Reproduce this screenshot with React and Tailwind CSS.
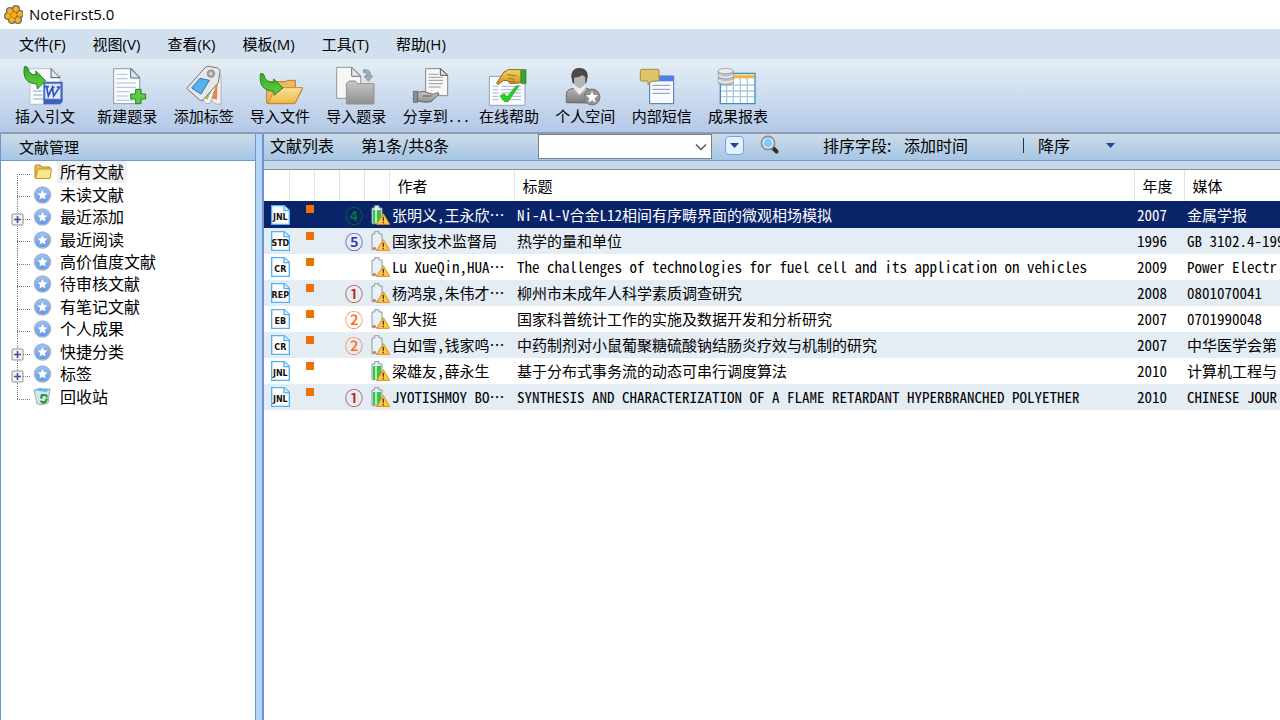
import React from "react";

const ui = "font-['Open_Sans','Noto_Sans_CJK_SC',sans-serif]";
const song = "font-['Noto_Sans_CJK_SC',sans-serif] [font-feature-settings:'hwid']";
const hei = "font-['Noto_Sans_CJK_SC',sans-serif]";

const menus = ["文件(F)", "视图(V)", "查看(K)", "模板(M)", "工具(T)", "帮助(H)"];

function Logo() {
  const cells = [[7, 6], [13, 4], [5, 11], [11, 10], [17, 9], [9, 15], [15, 15]];
  return (
    <svg className="size-5" viewBox="0 0 20 20" aria-hidden="true">
      {cells.map(([x, y]) => (
        <circle key={`b${x}-${y}`} cx={x} cy={y} r="4" fill="#5a6a78" />
      ))}
      {cells.map(([x, y]) => (
        <path key={`c${x}-${y}`} d={`M${x - 2.8} ${y}l1.3-2.4h2.8l1.4 2.4-1.4 2.5h-2.8z`} fill="#ffb31a" stroke="#e09a18" strokeWidth=".9" />
      ))}
    </svg>
  );
}

function Defs() {
  return (
    <svg className="absolute size-0" aria-hidden="true">
      <defs>
        <linearGradient id="green" x1="0" y1="0" x2="0" y2="1">
          <stop offset="0" stopColor="#3fa52c" />
          <stop offset="1" stopColor="#5fd03c" />
        </linearGradient>
        <linearGradient id="gray" x1="0" y1="0" x2="0" y2="1">
          <stop offset="0" stopColor="#c8c8c8" />
          <stop offset="1" stopColor="#8f8f8f" />
        </linearGradient>
        <linearGradient id="folder" x1="0" y1="0" x2="0" y2="1">
          <stop offset="0" stopColor="#fbe09a" />
          <stop offset="1" stopColor="#f0b84a" />
        </linearGradient>
        <linearGradient id="person" x1="0" y1="0" x2="0" y2="1">
          <stop offset="0" stopColor="#b5b5b5" />
          <stop offset="1" stopColor="#7c7c7c" />
        </linearGradient>
        <linearGradient id="orb" x1="0" y1="0" x2="0" y2="1">
          <stop offset="0" stopColor="#9cc3f7" />
          <stop offset="1" stopColor="#6294e2" />
        </linearGradient>
        <linearGradient id="gold" x1="0" y1="0" x2="0" y2="1">
          <stop offset="0" stopColor="#f6d560" />
          <stop offset="1" stopColor="#c8961e" />
        </linearGradient>
      </defs>
    </svg>
  );
}

const greenArrow = "M73 25Q83 24 84 30Q84 48 108 50L107 38L137 67L112 92L110 77Q82 76 74 55Q70 40 73 25Z";

const drawings = {
  cite: (
    <>
      <path d="M90 31H160L180 51V138H90Z" fill="#f8fafc" stroke="#a9b0b8" strokeWidth="2" />
      <path d="M153 31L180 58H153Z" fill="#dfe8ee" stroke="#4e5b68" strokeWidth="3" />
      <path d="M100 98H127M100 110H127M100 122H140" stroke="#8ea6c8" strokeWidth="3" />
      <path d="M130 70H188V130L180 138H130Z" fill="#3c62c0" />
      <path d="M135 76H182V122H135Z" fill="#e4ebf8" stroke="#6e8dd8" strokeWidth="2" />
      <path d="M134 85H147M140 86L145 113L157 87L161 113L179 86M170 86H181M157 87H164" fill="none" stroke="#2c55b8" strokeWidth="5" />
      <path d={greenArrow} fill="url(#green)" stroke="#27851d" strokeWidth="3" />
    </>
  ),
  add: (
    <>
      <path d="M341 31H395L419 57V136H341Z" fill="#f9fbfd" stroke="#8f98a6" strokeWidth="3" />
      <path d="M392 31L419 59H392Z" fill="#d9e8f0" stroke="#4f7386" strokeWidth="3" />
      <path d="M349 48H382M349 61H384M349 74H408M349 87H408M349 100H389M349 113H384M349 126H400" stroke="#b3bdd6" strokeWidth="3" />
      <path d="M407 93H423V107H437V122H423V136H407V122H392V107H407Z" fill="#5ccb45" stroke="#25831c" strokeWidth="3" />
    </>
  ),
  tag: (
    <>
      <path d="M632 60L660 50V137H645L625 120Z" fill="#f2f2f2" stroke="#999" strokeWidth="2" />
      <path d="M636 76L650 72L648 124L630 120Z" fill="#ef8545" />
      <path d="M590 105L632 60L648 74L627 135L615 136Z" fill="#f7f7f7" stroke="#999" strokeWidth="2" />
      <path d="M610 104L629 78L636 83L620 124L604 115Z" fill="#8cd13f" />
      <path d="M612 28Q617 23 625 24L650 29Q657 32 657 40L652 73L606 125Q600 129 594 123L557 90Z" fill="#e7e7e7" stroke="#777" strokeWidth="3" />
      <path d="M597 60L625 66L600 107L572 89Z" fill="#58b1eb" stroke="#2879b7" strokeWidth="3" />
      <circle cx="630" cy="46" r="11" fill="#aaa" stroke="#888" strokeWidth="3" />
      <circle cx="630" cy="46" r="4" fill="#ddd" />
    </>
  ),
  importFile: (
    <>
      <path d="M800 134V70H856L862 66H886V90H908L885 136H804Z" fill="#edb95e" stroke="#b9782a" strokeWidth="3" />
      <path d="M826 88H908L885 135H804Z" fill="url(#folder)" stroke="#c98a32" strokeWidth="3" />
      <path d="M781 46Q792 44 793 53Q795 70 821 73V62L849 89L822 111V99Q791 97 783 76Q779 61 781 46Z" fill="url(#green)" stroke="#27851d" strokeWidth="3" />
    </>
  ),
  importRecord: (
    <>
      <path d="M1010 27H1055L1082 53V120H1010Z" fill="#f7f7f7" stroke="#969696" strokeWidth="3" />
      <path d="M1055 27L1082 54H1055Z" fill="#e3e3e3" stroke="#777" strokeWidth="3" />
      <path d="M1039 137V76L1047 68H1067L1073 76H1122V137Z" fill="url(#gray)" stroke="#929292" strokeWidth="3" />
      <path d="M1091 34Q1111 33 1111 47V53H1118L1105 69L1093 53H1101Q1101 42 1090 42Z" fill="#a5adb4" stroke="#707880" strokeWidth="2" />
    </>
  ),
  share: (
    <>
      <path d="M110 31H155L176 50V112H110Z" fill="#f8f8f8" stroke="#858585" strokeWidth="3" />
      <path d="M154 31L176 51H154Z" fill="#ddd" stroke="#555" strokeWidth="3" />
      <path d="M119 48H148M119 57H162M119 66H162M119 76H162M119 86H155" stroke="#999" strokeWidth="3" />
      <path d="M73 99H86V132H73Z" fill="#8c8c8c" stroke="#555" strokeWidth="2" />
      <path d="M86 102Q105 95 121 105L132 108L147 103Q154 106 145 113L126 130Q110 134 86 128Z" fill="url(#gray)" stroke="#666" strokeWidth="3" />
      <path d="M102 113H127" stroke="#555" strokeWidth="3" />
    </>
  ),
  help: (
    <>
      <path d="M298 54H405V141H298Z" fill="#fbfcfe" stroke="#91a0bd" strokeWidth="3" />
      <path d="M308 84H325M308 94H325M308 104H325M308 114H325M308 124H325M334 84H393M334 94H393M334 104H393M334 114H393M334 124H393" stroke="#a6b5d2" strokeWidth="3" />
      <path d="M330 113L343 106L351 116L377 84L387 82L354 130H344Z" fill="#25cf25" stroke="#13a913" strokeWidth="2" />
      <path d="M341 42L355 34H393V72L381 75H359L354 67L341 66L324 79L320 74Z" fill="url(#gold)" stroke="#8f6717" strokeWidth="3" />
      <path d="M352 49L379 53M355 60L374 63M359 70H376" stroke="#a2731b" strokeWidth="3" />
      <path d="M394 34H408V76H394Z" fill="#35a52f" stroke="#237b23" strokeWidth="2" />
    </>
  ),
  person: (
    <>
      <path d="M529 133V108Q529 94 547 91L590 90Q608 95 609 113V134Z" fill="url(#person)" stroke="#666" strokeWidth="3" />
      <path d="M551 90L568 110L587 90L584 78H555Z" fill="#ececec" />
      <path d="M545 54Q545 31 568 30Q592 30 592 54L588 74H549Z" fill="#4a4a4a" stroke="#333" strokeWidth="2" />
      <path d="M552 58Q570 57 577 50L586 57V74Q579 89 568 89Q556 88 552 74Z" fill="#b5b5b5" />
      <circle cx="606" cy="116" r="24" fill="#929292" stroke="#777" strokeWidth="3" />
      <path d="M606 98L611 110L624 111L614 120L617 133L606 126L595 133L598 120L588 111L601 110Z" fill="#fff" />
    </>
  ),
  message: (
    <>
      <path d="M776 53H848V136H776Z" fill="#f8fbff" stroke="#506eaf" strokeWidth="3" />
      <path d="M777 53H847V69H777Z" fill="#4d81e7" />
      <path d="M784 81H837M784 93H837M784 105H837" stroke="#8b96b8" strokeWidth="3" />
      <path d="M752 33H801Q804 33 804 37V64Q804 68 800 68H784L771 79V68H752Q748 68 748 64V37Q748 33 752 33Z" fill="#e0c568" stroke="#a58c36" strokeWidth="3" />
    </>
  ),
  report: (
    <>
      <path d="M991 45H1095V136H991Z" fill="#fff" stroke="#3b8bc7" strokeWidth="4" />
      <path d="M1030 49H1092V60H1030Z" fill="#f8b72c" />
      <path d="M994 80H1092M994 98H1092M994 115H1092M1010 80V133M1030 49V133M1051 49V133M1072 49V133" stroke="#a6c9e0" strokeWidth="4" />
      <path d="M985 38V72Q987 80 1007 80Q1029 79 1030 71V38Z" fill="#bfc4c9" stroke="#848b91" strokeWidth="2" />
      <ellipse cx="1007" cy="38" rx="23" ry="8" fill="#e8eaec" stroke="#8a9095" strokeWidth="2" />
      <path d="M985 52Q1007 64 1030 52M985 66Q1007 78 1030 66" fill="none" stroke="#f2f4f5" strokeWidth="4" />
      <path d="M985 56Q1007 68 1030 56" fill="none" stroke="#858c93" strokeWidth="2" />
    </>
  ),
};

const tools = [
  ["cite", "插入引文", "75 20 120 120"],
  ["add", "新建题录", "321 20 120 120"],
  ["tag", "添加标签", "549 20 120 120"],
  ["importFile", "导入文件", "780 20 120 120"],
  ["importRecord", "导入题录", "1008 20 120 120"],
  ["share", "分享到...", "72 20 120 120"],
  ["help", "在线帮助", "297 20 120 120"],
  ["person", "个人空间", "525 20 120 120"],
  ["message", "内部短信", "753 20 120 120"],
  ["report", "成果报表", "984 20 120 120"],
];

const tree = [
  { label: "所有文献", icon: "folder", active: true },
  { label: "未读文献" },
  { label: "最近添加", branch: true },
  { label: "最近阅读" },
  { label: "高价值度文献" },
  { label: "待审核文献" },
  { label: "有笔记文献" },
  { label: "个人成果" },
  { label: "快捷分类", branch: true },
  { label: "标签", branch: true },
  { label: "回收站", icon: "bin" },
];

function TreeIcon({ kind }) {
  if (kind === "folder")
    return (
      <svg className="size-5" viewBox="0 0 20 20" aria-hidden="true">
        <path d="M2 16V4Q2 3 3 3H7L9 5H17V16Z" fill="#e8bd48" stroke="#b98520" />
        <path d="M5 7H18.5L17 16.5H2.5Z" fill="#fbe58c" stroke="#c4932a" />
      </svg>
    );
  if (kind === "bin")
    return (
      <svg className="size-5" viewBox="0 0 20 20" aria-hidden="true">
        <path d="M1 3L17 2L15 16Q10 19 4 17Z" fill="#d5e3ec" stroke="#9bb0bd" />
        <path d="M1 3L6 1L17 2L13 5Z" fill="#65b5e5" />
        <path d="M7 11L8 7H13L15 9L14 11L12 9H10L9 12ZM8 16L7 13L9 14H12L13 11L15 12L13 16L10 17Z" fill="#249c32" />
      </svg>
    );
  return (
    <svg className="size-5" viewBox="0 0 20 20" aria-hidden="true">
      <circle cx="9.5" cy="10" r="8" fill="url(#orb)" stroke="#a2b4cf" strokeWidth="1.4" />
      <path d="M9.5 5L11 8.2L14.4 8.6L11.9 11L12.5 14.4L9.5 12.7L6.5 14.4L7.1 11L4.6 8.6L8 8.2Z" fill="#fff" />
    </svg>
  );
}

function TreeGuide({ first, last, branch }) {
  return (
    <svg className="h-full w-8 shrink-0" aria-hidden="true">
      <line x1="16.5" x2="16.5" y1={first ? "58%" : "0"} y2={last ? "58%" : "100%"} stroke="#777" strokeDasharray="1 1" />
      <line x1="16" x2="29" y1="13.5" y2="13.5" stroke="#777" strokeDasharray="1 1" />
      {branch && (
        <g>
          <rect x="11" y="8" width="11" height="11" rx="1" fill="#f3f3f3" stroke="#8f8f8f" strokeWidth="1" />
          <path d="M13 13.5H20M16.5 10V17" stroke="#3a4fa0" strokeWidth="1.6" />
        </g>
      )}
    </svg>
  );
}

const rows = [
  ["JNL", "④", "text-[#0a7a2c]", true, "张明义,王永欣…", "Ni-Al-V合金L12相间有序畴界面的微观相场模拟", "2007", "金属学报"],
  ["STD", "⑤", "text-[#3030a8]", false, "国家技术监督局", "热学的量和单位", "1996", "GB 3102.4-199"],
  ["CR", "", "", false, "Lu XueQin,HUA…", "The challenges of technologies for fuel cell and its application on vehicles", "2009", "Power Electr"],
  ["REP", "①", "text-[#b82020]", false, "杨鸿泉,朱伟才…", "柳州市未成年人科学素质调查研究", "2008", "0801070041"],
  ["EB", "②", "text-[#ff6a20]", false, "邹大挺", "国家科普统计工作的实施及数据开发和分析研究", "2007", "0701990048"],
  ["CR", "②", "text-[#ff6a20]", false, "白如雪,钱家鸣…", "中药制剂对小鼠葡聚糖硫酸钠结肠炎疗效与机制的研究", "2007", "中华医学会第"],
  ["JNL", "", "", true, "梁雄友,薛永生", "基于分布式事务流的动态可串行调度算法", "2010", "计算机工程与"],
  ["JNL", "①", "text-[#b82020]", true, "JYOTISHMOY BO…", "SYNTHESIS AND CHARACTERIZATION OF A FLAME RETARDANT HYPERBRANCHED POLYETHER", "2010", "CHINESE JOUR"],
];

function DocIcon({ kind }) {
  return (
    <svg className="ml-[7px] h-5 w-[19px]" viewBox="0 0 57 60" role="img" aria-label={kind}>
      <path d="M2 2H40L55 16V58H2Z" fill="#fff" stroke="#55b0f5" strokeWidth="4" />
      <path d="M39 2V17H55" fill="#d8efff" stroke="#55b0f5" strokeWidth="4" />
      <text x="28" y="45" textAnchor="middle" className="fill-[#111] font-['DejaVu_Sans',sans-serif] text-[24px] font-bold">{kind}</text>
    </svg>
  );
}

function StateIcon({ full }) {
  return (
    <svg className="ml-[7px] h-5 w-[19px]" viewBox="333 220 57 60" aria-hidden="true">
      <path d="M344 222H357V229H366V276H336V229H344Z" fill="#e9f1f6" stroke="#8c9aa6" strokeWidth="3" />
      {full ? (
        <>
          <path d="M339 235H363V274H339Z" fill="#35c445" />
          <path d="M345 235H351V274H345Z" fill="#b9f2b4" />
        </>
      ) : (
        <path d="M339 269H347V274H339Z" fill="#ef4b4b" />
      )}
      <path d="M370 246L389 278H350Z" fill="#ffc742" stroke="#d98c1e" strokeWidth="3" strokeLinejoin="round" />
      <path d="M370 255V267M370 270V275" stroke="#4d3a10" strokeWidth="4" />
    </svg>
  );
}

const th = "border-r border-[#e2e2e2] text-left font-normal";
const cell = "truncate pl-[3px]";

export default function App() {
  return (
    <div lang="zh-CN" className={`flex h-screen flex-col overflow-hidden bg-white text-black ${hei}`}>
      <Defs />
      <header className={`flex h-[29px] shrink-0 items-center gap-[6px] pl-[3px] text-[15px] ${ui}`}>
        <Logo />
        <h1>NoteFirst5.0</h1>
      </header>
      <nav className={`flex h-[30px] shrink-0 items-center gap-[27px] bg-[#d2dfef] pl-[19px] text-[15px] ${ui}`}>
        {menus.map((m) => (
          <button key={m} type="button">{m}</button>
        ))}
      </nav>
      <div className="h-[75px] shrink-0 overflow-hidden border-b-2 border-[#8d9cb5] bg-linear-to-b from-[#e5eff5] to-[#b4c8e7] pt-[6px] pl-[15px]">
        <div className="flex max-w-[753px] justify-between">
          {tools.map(([id, label, box], i) => (
            <button key={id} type="button" className={`flex w-[60px] shrink-0 flex-col items-center ${i === 0 ? "mr-[6px]" : ""}`}>
              <svg className="size-10 overflow-visible" viewBox={box} aria-hidden="true">{drawings[id]}</svg>
              <span className={`w-full text-left whitespace-nowrap text-[15px] leading-[22px] ${song}`}>{label}</span>
            </button>
          ))}
        </div>
      </div>
      <div className="flex min-h-0 flex-1">
        <aside className="w-64 shrink-0 border-x border-[#6f93cf]">
          <h2 className="flex h-[27px] items-center border-b border-[#7599d1] bg-linear-to-b from-[#cbdcea] to-[#a6c5e3] pl-[18px] text-[15px]">文献管理</h2>
          <ul className="grid h-[247px] auto-rows-fr text-[16px]">
            {tree.map((t, i) => (
              <li key={t.label} className="flex min-h-0 items-center">
                <TreeGuide first={i === 0} last={i === tree.length - 1} branch={t.branch} />
                <TreeIcon kind={t.icon} />
                <button type="button" className={`ml-1 px-[3px] pb-0.5 leading-5 ${t.active ? "bg-[#f0f0f0]" : ""}`}>{t.label}</button>
              </li>
            ))}
          </ul>
        </aside>
        <div className="w-[6px] shrink-0 bg-[#b5d5fb]" />
        <main className="flex min-w-0 flex-1 flex-col border-l-2 border-[#6f93cf]">
          <div className="flex h-[27px] shrink-0 items-center overflow-hidden border-b border-[#7599d1] bg-linear-to-b from-[#cbdcea] to-[#a6c5e3] pb-1 pl-[6px] text-[16px] leading-6 whitespace-nowrap">
            <h2 className="w-[91px] shrink-0">文献列表</h2>
            <p className="w-[177px] shrink-0">第1条/共8条</p>
            <div className="relative flex h-[25px] w-[174px] shrink-0 self-start">
              <select aria-label="检索" className="h-full w-full appearance-none rounded-none border border-[#7c8187] bg-white px-1 text-[15px]">
                <option></option>
              </select>
              <svg className="pointer-events-none absolute top-[9px] right-[5px] h-2 w-3" viewBox="0 0 12 8" aria-hidden="true">
                <path d="M1 1.5L6 6.5L11 1.5" fill="none" stroke="#555" strokeWidth="1.5" />
              </svg>
            </div>
            <button type="button" aria-label="检索选项" className="ml-[13px] flex size-[19px] shrink-0 items-center justify-center rounded-sm border border-[#6da3ea] bg-[#e4f0ff]">
              <svg className="h-[5px] w-[9px]" viewBox="0 0 9 5" aria-hidden="true"><path d="M0 0H9L4.5 5Z" fill="#24409a" /></svg>
            </button>
            <button type="button" aria-label="搜索" className="ml-4 size-5 shrink-0">
              <svg className="size-5" viewBox="0 0 20 20" aria-hidden="true">
                <path d="M12 12L16.5 16.5" stroke="#333" strokeWidth="4" strokeLinecap="round" />
                <circle cx="8" cy="8" r="6.3" fill="#86c6fb" stroke="#8b9197" strokeWidth="2.2" />
                <circle cx="8" cy="8" r="5" fill="none" stroke="#eef5fa" strokeWidth="1.2" />
              </svg>
            </button>
            <label htmlFor="sort" className="ml-[43px] w-[81px] shrink-0">排序字段:</label>
            <select id="sort" className="w-[115px] shrink-0 appearance-none bg-transparent">
              <option>添加时间</option>
            </select>
            <span className="ml-1 h-[15px] w-px shrink-0 bg-[#333]" />
            <div className="relative ml-[14px] flex w-[77px] shrink-0 items-center">
              <select aria-label="排序方向" className="w-full appearance-none bg-transparent">
                <option>降序</option>
              </select>
              <svg className="pointer-events-none absolute right-0 h-[5px] w-[9px]" viewBox="0 0 9 5" aria-hidden="true"><path d="M0 0H9L4.5 5Z" fill="#24409a" /></svg>
            </div>
          </div>
          <div className="h-[9px] shrink-0 border-b border-[#8b9096] bg-[#c6d9e8]" />
          <table className={`w-full table-fixed border-collapse text-[15px] leading-5 ${song}`}>
            <colgroup>
              <col className="w-[25px]" />
              <col className="w-[25px]" />
              <col className="w-[25px]" />
              <col className="w-[25px]" />
              <col className="w-[25px]" />
              <col className="w-[125px]" />
              <col />
              <col className="w-[50px]" />
              <col className="w-24" />
            </colgroup>
            <thead>
              <tr className="h-[31px]">
                <th className={th} aria-label="类型" />
                <th className={th} aria-label="标记" />
                <th className={th} aria-label="附件" />
                <th className={th} aria-label="等级" />
                <th className={th} aria-label="状态" />
                <th className={`${th} pl-2`}>作者</th>
                <th className={`${th} pl-2`}>标题</th>
                <th className={`${th} pl-2`}>年度</th>
                <th className="pl-2 text-left font-normal">媒体</th>
              </tr>
            </thead>
            <tbody>
              {rows.map(([kind, rank, tone, full, author, title, year, media], i) => (
                <tr key={title} className={i === 0 ? "h-[27px] bg-[#0a246a] text-white" : i % 2 ? "h-[26px] bg-[#e4ecf4]" : "h-[26px]"}>
                  <td><DocIcon kind={kind} /></td>
                  <td className="align-top"><span className="mt-1 ml-[17px] block size-2 bg-[#ee7203]" /></td>
                  <td />
                  <td className={`pl-[6px] text-[18px] font-medium whitespace-nowrap ${tone}`}>{rank}</td>
                  <td><StateIcon full={full} /></td>
                  <td className={cell}>{author}</td>
                  <td className={cell}>{title}</td>
                  <td className={cell}>{year}</td>
                  <td className="overflow-hidden pl-[3px] whitespace-nowrap">{media}</td>
                </tr>
              ))}
            </tbody>
          </table>
        </main>
      </div>
    </div>
  );
}
